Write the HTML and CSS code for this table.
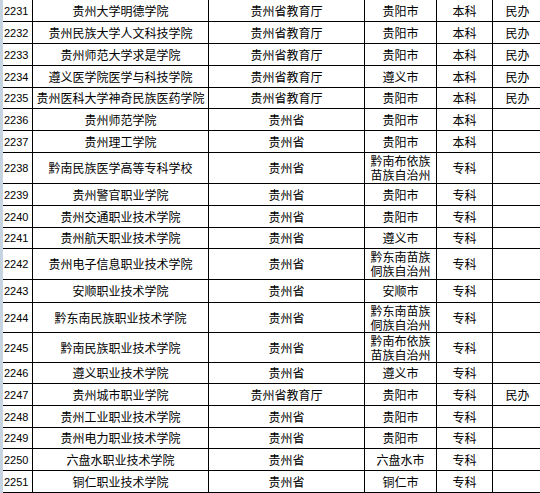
FILE: index.html
```html
<!DOCTYPE html>
<html lang="zh-CN">
<head>
<meta charset="utf-8">
<title>贵州高校名单</title>
<link rel="stylesheet" href="styles.css">
</head>
<body>
<div class="sheet">
  <div class="grid">
    <div class="c num">2231</div><div class="c">贵州大学明德学院</div><div class="c">贵州省教育厅</div><div class="c">贵阳市</div><div class="c">本科</div><div class="c">民办</div>
    <div class="c num">2232</div><div class="c">贵州民族大学人文科技学院</div><div class="c">贵州省教育厅</div><div class="c">贵阳市</div><div class="c">本科</div><div class="c">民办</div>
    <div class="c num">2233</div><div class="c">贵州师范大学求是学院</div><div class="c">贵州省教育厅</div><div class="c">贵阳市</div><div class="c">本科</div><div class="c">民办</div>
    <div class="c num">2234</div><div class="c">遵义医学院医学与科技学院</div><div class="c">贵州省教育厅</div><div class="c">遵义市</div><div class="c">本科</div><div class="c">民办</div>
    <div class="c num">2235</div><div class="c">贵州医科大学神奇民族医药学院</div><div class="c">贵州省教育厅</div><div class="c">贵阳市</div><div class="c">本科</div><div class="c">民办</div>
    <div class="c num">2236</div><div class="c">贵州师范学院</div><div class="c">贵州省</div><div class="c">贵阳市</div><div class="c">本科</div><div class="c"></div>
    <div class="c num">2237</div><div class="c">贵州理工学院</div><div class="c">贵州省</div><div class="c">贵阳市</div><div class="c">本科</div><div class="c"></div>
    <div class="c num">2238</div><div class="c">黔南民族医学高等专科学校</div><div class="c">贵州省</div><div class="c two">黔南布依族<br>苗族自治州</div><div class="c">专科</div><div class="c"></div>
    <div class="c num">2239</div><div class="c">贵州警官职业学院</div><div class="c">贵州省</div><div class="c">贵阳市</div><div class="c">专科</div><div class="c"></div>
    <div class="c num">2240</div><div class="c">贵州交通职业技术学院</div><div class="c">贵州省</div><div class="c">贵阳市</div><div class="c">专科</div><div class="c"></div>
    <div class="c num">2241</div><div class="c">贵州航天职业技术学院</div><div class="c">贵州省</div><div class="c">遵义市</div><div class="c">专科</div><div class="c"></div>
    <div class="c num">2242</div><div class="c">贵州电子信息职业技术学院</div><div class="c">贵州省</div><div class="c two">黔东南苗族<br>侗族自治州</div><div class="c">专科</div><div class="c"></div>
    <div class="c num">2243</div><div class="c">安顺职业技术学院</div><div class="c">贵州省</div><div class="c">安顺市</div><div class="c">专科</div><div class="c"></div>
    <div class="c num">2244</div><div class="c">黔东南民族职业技术学院</div><div class="c">贵州省</div><div class="c two">黔东南苗族<br>侗族自治州</div><div class="c">专科</div><div class="c"></div>
    <div class="c num">2245</div><div class="c">黔南民族职业技术学院</div><div class="c">贵州省</div><div class="c two">黔南布依族<br>苗族自治州</div><div class="c">专科</div><div class="c"></div>
    <div class="c num">2246</div><div class="c">遵义职业技术学院</div><div class="c">贵州省</div><div class="c">遵义市</div><div class="c">专科</div><div class="c"></div>
    <div class="c num">2247</div><div class="c">贵州城市职业学院</div><div class="c">贵州省教育厅</div><div class="c">贵阳市</div><div class="c">专科</div><div class="c">民办</div>
    <div class="c num">2248</div><div class="c">贵州工业职业技术学院</div><div class="c">贵州省</div><div class="c">贵阳市</div><div class="c">专科</div><div class="c"></div>
    <div class="c num">2249</div><div class="c">贵州电力职业技术学院</div><div class="c">贵州省</div><div class="c">贵阳市</div><div class="c">专科</div><div class="c"></div>
    <div class="c num">2250</div><div class="c">六盘水职业技术学院</div><div class="c">贵州省</div><div class="c">六盘水市</div><div class="c">专科</div><div class="c"></div>
    <div class="c num">2251</div><div class="c">铜仁职业技术学院</div><div class="c">贵州省</div><div class="c">铜仁市</div><div class="c">专科</div><div class="c"></div>
  </div>
</div>
</body>
</html>
```
FILE: styles.css
```css
html, body {
  margin: 0;
  padding: 0;
  background: #fff;
}
body {
  width: 540px;
  height: 493px;
  overflow: hidden;
}
.sheet {
  border-left: 3px solid #c6d4e1;
  width: 560px;
}
.grid {
  display: grid;
  grid-template-columns: 30px 176px 156px 72px 56px 50px;
  grid-template-rows:
    22px 22px 22px 22px 21px 22px 22px 31px 22px 22px 21px
    31px 23px 30px 30px 21px 22px 22px 21px 22px 22px;
  font-family: "Noto Sans CJK SC", "Noto Sans", sans-serif;
  font-size: 12px;
  color: #000;
}
.c {
  box-sizing: border-box;
  border-right: 1px solid #000;
  border-bottom: 1px solid #000;
  display: flex;
  align-items: center;
  justify-content: center;
  text-align: center;
  line-height: 14px;
  white-space: nowrap;
}
.num {
  justify-content: flex-start;
  padding-left: 1px;
  font-family: "Liberation Sans", Arial, sans-serif;
  font-size: 11px;
}
.two {
  line-height: 14px;
}
```
